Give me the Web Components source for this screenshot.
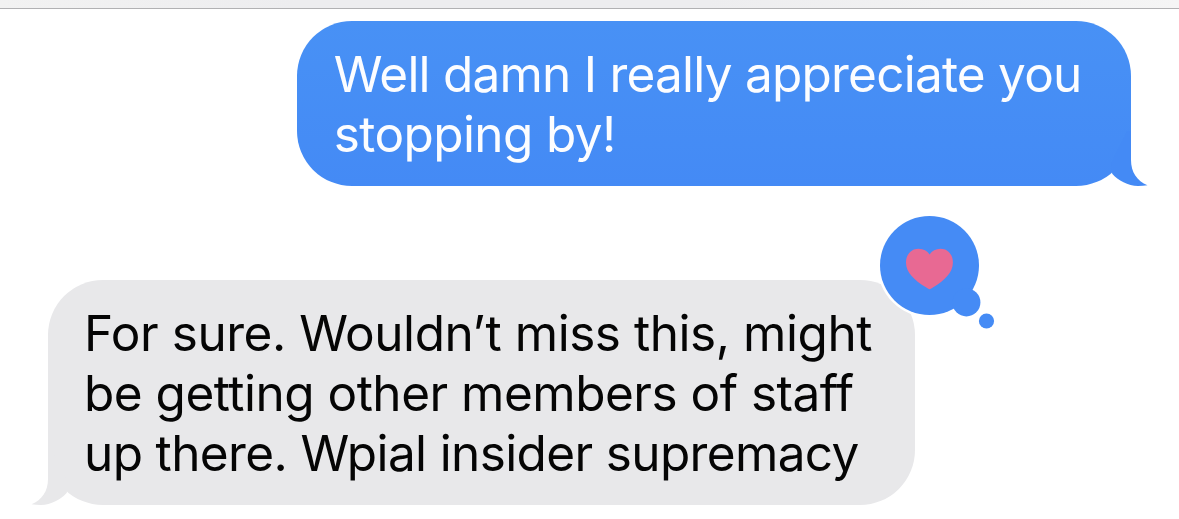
<!DOCTYPE html>
<html lang="en">
<head>
<meta charset="utf-8">
<title>Messages</title>
<style>
html,body{margin:0;background:#fff}
body{width:1179px;height:519px;overflow:hidden;font-family:Inter,"Liberation Sans",sans-serif}
</style>
</head>
<body>
<message-thread>
  <message-bubble kind="sent">
    <message-line style="letter-spacing:-.77px">Well damn I really appreciate you</message-line>
    <message-line style="letter-spacing:-.6px">stopping by!</message-line>
  </message-bubble>
  <message-bubble kind="received">
    <message-line style="letter-spacing:-.45px">For sure. Wouldn’t miss this, might</message-line>
    <message-line style="letter-spacing:-.5px">be getting other members of staff</message-line>
    <message-line style="letter-spacing:-.63px">up there. Wpial insider supremacy</message-line>
    <heart-reaction slot="reaction"></heart-reaction>
  </message-bubble>
</message-thread>
<script>
class MessageThread extends HTMLElement{
  constructor(){super();this.attachShadow({mode:'open'}).innerHTML=`
  <style>
  :host{display:block;height:519px;background:#fff}
  header{height:8px;border-bottom:1px solid #b1b1b3;background:linear-gradient(90deg,#f2f2f2,#ededef 25%,#ededef 60%,#f5f5f5)}
  main{display:flex;flex-direction:column;gap:94px;padding:12px 48px 0 48px}
  </style><header></header><main><slot></slot></main>`}
}
class MessageBubble extends HTMLElement{
  constructor(){super();this.attachShadow({mode:'open'}).innerHTML=`
  <style>
  :host{display:block;position:relative;box-sizing:border-box;border-radius:55px;padding:23px 36px 22px;font-size:49.5px;line-height:60px;white-space:nowrap}
  :host([kind=sent]){align-self:flex-end;width:834px;padding-left:36.8px;background:linear-gradient(#4891f5,#448af5);color:#fcfdff}
  :host([kind=received]){align-self:flex-start;width:867px;background:#e8e8ea;color:#050505}
  .tail{position:absolute;bottom:0;right:-18px;width:56px;height:60px}
  :host([kind=sent]) .tail{fill:#448af5}
  :host([kind=received]) .tail{right:auto;left:-18px;transform:scaleX(-1);fill:#e8e8ea}
  </style>
  <slot></slot>
  <svg class="tail" viewBox="0 0 56 60"><path d="M19.200 47.800C25 54.500 35 60 45 60Q50 60 54.500 59.200C44 55 38 46 38 34V5H34L18 38Z"/></svg>
  <slot name="reaction"></slot>`}
}
class MessageLine extends HTMLElement{
  constructor(){super();this.attachShadow({mode:'open'}).innerHTML=`<style>:host{display:block}</style><slot></slot>`}
}
class HeartReaction extends HTMLElement{
  constructor(){super();this.attachShadow({mode:'open'}).innerHTML=`
  <style>:host{display:block;position:absolute;left:828px;top:-68px;width:124px;height:124px;line-height:0}</style>
  <svg width="124" height="124" viewBox="0 0 124 124">
    <circle cx="53.500" cy="53.500" r="52" fill="#fff"/>
    <g fill="#458bf5"><circle cx="53.500" cy="53.400" r="49.500"/><circle cx="90.400" cy="90.400" r="14"/><circle cx="110.500" cy="109" r="7.600"/></g>
    <path d="M53.600 77.200C52.600 77.200 51.500 76.200 50 75.300C38.500 68.500 30 60.500 30 50.500C30 42.300 35.500 36.700 42.500 36.700C47.500 36.700 51.200 38.800 53.600 42.500C56 38.800 59.700 36.700 64.700 36.700C71.500 36.700 76.900 42.300 76.900 50.500C76.900 60.500 68.500 68.500 57.200 75.300C55.700 76.200 54.600 77.200 53.600 77.200Z" fill="#e86993"/>
  </svg>`}
}
customElements.define('message-thread',MessageThread);
customElements.define('message-bubble',MessageBubble);
customElements.define('message-line',MessageLine);
customElements.define('heart-reaction',HeartReaction);
</script>
</body>
</html>
